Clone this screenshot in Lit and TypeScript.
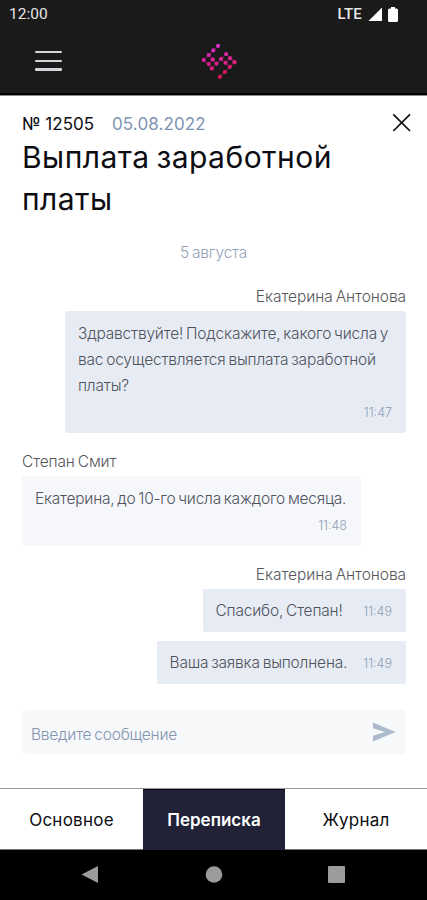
import { LitElement, html, css, svg } from "lit";
import { customElement, property } from "lit/decorators.js";

const LOGO_DOTS: Array<[number, number, string]> = [
  [27.6, 10.8, "#d531c4"], [22.8, 15.4, "#d52cb8"], [18.2, 20, "#d927ae"], [13.2, 25, "#dc22a2"],
  [22.2, 24.4, "#dc229c"], [18.2, 29, "#de1e8e"], [26, 28.6, "#de1d88"], [21.4, 33.4, "#e01a7a"],
  [30.6, 23.8, "#da239c"], [35.6, 19, "#d929a4"], [35, 27.8, "#dd2088"], [39.6, 23.2, "#db2492"],
  [44, 27.2, "#df207e"], [39.4, 31.8, "#e01b70"], [34.4, 37, "#e21760"], [29.4, 41.8, "#dc1554"],
];

@customElement("chat-bubble")
export class ChatBubble extends LitElement {
  @property() time = "";
  @property({ type: Boolean, reflect: true }) incoming = false;
  @property({ type: Boolean, reflect: true }) inline = false;

  static styles = css`
    :host {
      display: flex;
      flex-direction: column;
      box-sizing: border-box;
      background: #e7ecf4;
      border-radius: 2px;
      padding: 10px 14px 8px 13px;
      color: #50545e;
      font-size: 15.5px;
      line-height: 26px;
      white-space: nowrap;
      letter-spacing: -0.19px;
      word-spacing: -1.3px;
    }
    :host([incoming]) { background: #f5f7fb; letter-spacing: -0.23px; }
    :host([inline]) {
      flex-direction: row;
      justify-content: space-between;
      align-items: center;
      padding: 0 14px 0 12.5px;
      height: 43px;
    }
    .time {
      align-self: flex-end;
      color: #8f9db4;
      font-size: 12.5px;
      line-height: 20px;
      margin-top: 4px;
      letter-spacing: 0;
    }
    :host([inline]) .time { align-self: center; margin-top: 2px; }
  `;

  render() {
    return html`<div><slot></slot></div><div class="time">${this.time}</div>`;
  }
}

@customElement("app-root")
export class AppRoot extends LitElement {
  static styles = css`
    :host {
      display: flex;
      flex-direction: column;
      width: 427px;
      height: 900px;
      overflow: hidden;
      background: #fff;
      font-family: Inter, "Open Sans", sans-serif;
      font-weight: 300;
      color: #0c0d12;
    }
    svg { display: block; }
    .top { background: #1a1a1a; height: 96px; border-bottom: 1px solid #8a8a8a; box-sizing: border-box; box-shadow: inset 0 -2px #000; flex: none; }
    .status {
      display: flex; justify-content: space-between; align-items: center;
      height: 28px; padding: 0 29px 0 9px;
      color: #e6e6e6; font: 400 15.5px/28px Roboto, sans-serif;
    }
    .sys { display: flex; align-items: center; gap: 5px; font-size: 15px; font-weight: 500; }
    .lte { letter-spacing: 0.2px; margin-right: 1px; }
    .bar { display: grid; grid-template-columns: 1fr 60px 1fr; height: 66px; padding-top: 7px; box-sizing: border-box; }
    .burger { display: flex; flex-direction: column; gap: 6.4px; padding: 16px 0 0 35px; }
    .burger i { width: 27px; height: 2.3px; border-radius: 1px; background: #d2d5da; }
    .head { display: flex; align-items: center; padding: 0 16px 0 22px; margin-top: 15px; height: 26px; font-size: 17px; line-height: 26px; font-weight: 400; }
    .head svg { margin-top: -3px; }
    .date { color: #8094b4; margin-left: 18px; flex: 1; letter-spacing: 0.1px; }
    h1 {
      margin: -1px 22px 0; font-size: 30px; line-height: 42px; font-weight: 400; height: 84px; white-space: nowrap;
      letter-spacing: 0.46px; word-spacing: -2px;
    }
    .day { text-align: center; color: #93a1b6; font-size: 15.5px; line-height: 20px; margin-top: 23px; letter-spacing: -0.2px; word-spacing: -1px; }
    .chat { display: flex; flex-direction: column; padding: 0 21px 0 22px; margin-top: 23px; }
    .name { font-size: 15.5px; line-height: 22px; color: #55575c; align-self: flex-end; white-space: nowrap; letter-spacing: -0.05px; word-spacing: -1.3px; }
    .name.left { align-self: flex-start; letter-spacing: -0.12px; }
    chat-bubble { align-self: flex-end; }
    chat-bubble[incoming] { align-self: flex-start; }
    .b1 { width: 341px; height: 122px; margin: 3px 0 18px; }
    .b2 { width: 339px; height: 70px; margin: 3px 0 18px; }
    .b3 { width: 203px; margin: 3px 0 9px; }
    .b4 { width: 249px; }
    .entry {
      display: flex; align-items: center; justify-content: space-between;
      margin: 26px 21px 0 22px; height: 44px; padding: 0 10px 0 9px; box-sizing: border-box;
      background: #f6f8fa; border-radius: 4px; color: #8495b2; font-size: 15.5px;
      letter-spacing: -0.22px; word-spacing: -1.2px;
    }
    .entry span { padding-top: 5px; }
    .tabs {
      display: grid; grid-template-columns: 143px 142px 1fr; height: 62px; margin-top: auto;
      box-sizing: border-box; border-top: 1px solid #9a9a9a; border-bottom: 1px solid #777; font-size: 17px; font-weight: 400; flex: none;
    }
    .tab { display: flex; align-items: center; justify-content: center; letter-spacing: 0.25px; padding-top: 1px; }
    .tab.on { background: #212238; color: #fff; font-weight: 600; margin-bottom: -1px; padding-top: 0; box-shadow: inset 0 1px #05051f; letter-spacing: 0; }
    .nav { background: #000; height: 50px; flex: none; }
  `;

  render() {
    return html`
      <header class="top">
        <div class="status">
          <span class="clock">12:00</span>
          <div class="sys">
            <span class="lte">LTE</span>
            <svg width="15" height="15" viewBox="0 0 15 15"><path d="M14 0.5V14H0.5Z" fill="#fff" /></svg>
            <svg width="10" height="15" viewBox="0 0 10 15"><path d="M3 0H7V1.5H8.5Q10 1.5 10 3V13.5Q10 15 8.5 15H1.5Q0 15 0 13.5V3Q0 1.5 1.5 1.5H3Z" fill="#fff" /></svg>
          </div>
        </div>
        <div class="bar">
          <div class="burger"><i></i><i></i><i></i></div>
          <svg width="60" height="50" viewBox="-6.5 0 60 50">
            <path d="M27.6 10.8L13.2 25L21.4 33.4L35.6 19L44 27.2L29.4 41.8M18.2 20L26 28.6M22.2 24.4L18.2 29M30.6 23.8L35 27.8L39.6 23.2M35 27.8L39.4 31.8" fill="none" stroke="#8e1d68" stroke-width="1" />
            ${LOGO_DOTS.map(([x, y, c]) => svg`<circle cx=${x} cy=${y} r="2.1" fill=${c} />`)}
          </svg>
        </div>
      </header>

      <div class="head">
        <span class="num">№ 12505</span>
        <span class="date">05.08.2022</span>
        <svg width="20" height="20" viewBox="0 0 20 20"><path d="M2.3 1.3L19 18M19 1.3L2.3 18" stroke="#111" stroke-width="1.7" /></svg>
      </div>
      <h1>Выплата заработной<br />платы</h1>
      <div class="day">5 августа</div>

      <main class="chat">
        <div class="name">Екатерина Антонова</div>
        <chat-bubble class="b1" time="11:47">Здравствуйте! Подскажите, какого числа у<br />вас осуществляется выплата заработной<br />платы?</chat-bubble>
        <div class="name left">Степан Смит</div>
        <chat-bubble class="b2" incoming time="11:48">Екатерина, до 10-го числа каждого месяца.</chat-bubble>
        <div class="name">Екатерина Антонова</div>
        <chat-bubble class="b3" inline time="11:49">Спасибо, Степан!</chat-bubble>
        <chat-bubble class="b4" inline time="11:49">Ваша заявка выполнена.</chat-bubble>
      </main>

      <div class="entry">
        <span>Введите сообщение</span>
        <svg width="24" height="20" viewBox="0 0 24 20"><path d="M1 0.5L23.5 10L1 19.5V13.8L13 10L1 6.2Z" fill="#acbacb" /></svg>
      </div>

      <nav class="tabs">
        <div class="tab"><span>Основное</span></div>
        <div class="tab on"><span>Переписка</span></div>
        <div class="tab"><span>Журнал</span></div>
      </nav>
      <svg class="nav" width="427" height="50" viewBox="0 0 427 50">
        <path d="M81.5 24.5L98 16V33Z" fill="#9c9c9c" />
        <circle cx="214" cy="24.5" r="8.3" fill="#9c9c9c" />
        <rect x="328" y="16" width="17" height="17" rx="1" fill="#9c9c9c" />
      </svg>
    `;
  }
}
